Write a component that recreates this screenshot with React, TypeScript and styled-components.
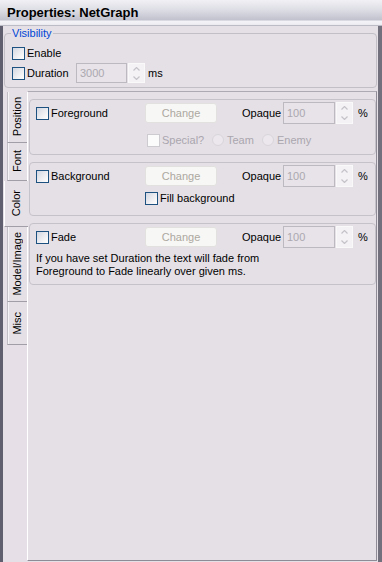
import React from 'react'
import styled, { createGlobalStyle } from 'styled-components'

const GlobalStyle = createGlobalStyle`
  html, body {
    margin: 0;
    padding: 0;
  }
  body {
    background: #e5e0e6;
    font-family: "Liberation Sans", Arial, sans-serif;
    font-size: 11px;
    color: #000;
  }
`

const Window = styled.div`
  width: 382px;
  height: 562px;
  display: flex;
  flex-direction: column;
  overflow: hidden;
  background: #e5e0e6;
`

const TitleBar = styled.div`
  height: 26px;
  flex: none;
  box-sizing: border-box;
  padding: 5px 0 0 7px;
  font-size: 13px;
  font-weight: bold;
  line-height: 15px;
  background: linear-gradient(
    #f1f1f5 0%,
    #dcdce4 40%,
    #c2c2ce 76%,
    #f3f3f7 82%,
    #eeeef3 94%,
    #a4a4b2 100%
  );
`

const Body = styled.div`
  flex: 1;
  min-height: 0;
  display: flex;
  flex-direction: column;
  padding: 1px 0 1px;
  border-left: 3px solid #5f5f6f;
  border-right: 4px solid #72707c;
`

const GroupBox = styled.fieldset`
  margin: 0 1px;
  padding: 4px 0 4px 7px;
  border: 1px solid #c3bfc7;
  border-radius: 4px;
  display: flex;
  flex-direction: column;
  gap: 1px;
`

const Legend = styled.legend`
  padding: 0 1px;
  margin-left: -1px;
  line-height: 13px;
  color: #0046d5;
`

const Row = styled.div<{ $h: number; $indent?: number }>`
  height: ${(p) => p.$h}px;
  display: flex;
  align-items: center;
  padding-left: ${(p) => p.$indent ?? 0}px;
`

const CheckLabel = styled.label<{ $w?: number; $disabled?: boolean }>`
  display: flex;
  align-items: center;
  gap: 2px;
  width: ${(p) => (p.$w ? `${p.$w}px` : 'auto')};
  flex: none;
  color: ${(p) => (p.$disabled ? '#aaa6ae' : '#000')};
`

const Check = styled.span<{ $disabled?: boolean }>`
  width: 13px;
  height: 13px;
  box-sizing: border-box;
  flex: none;
  border: 1px solid ${(p) => (p.$disabled ? '#cdcad0' : '#1c5180')};
  background: ${(p) =>
    p.$disabled ? '#fbfbfb' : 'linear-gradient(135deg, #d3d7e2 0%, #f4f4f6 70%, #ffffff 100%)'};
`

const Radio = styled.span`
  width: 12px;
  height: 12px;
  box-sizing: border-box;
  flex: none;
  border-radius: 50%;
  border: 1px solid #d8d5db;
  background: #ebe7ec;
  margin-right: 1px;
`

const NumberBox = styled.div<{ $w: number; $h: number }>`
  width: ${(p) => p.$w}px;
  height: ${(p) => p.$h}px;
  box-sizing: border-box;
  flex: none;
  border: 1px solid #bdb9c1;
  background: #e7e3e8;
  color: #aca8b0;
  padding: 0 0 0 3px;
  display: flex;
  align-items: center;
`

const Spinner = styled.div<{ $h: number }>`
  width: 17px;
  height: ${(p) => p.$h}px;
  box-sizing: border-box;
  flex: none;
  margin-left: 1px;
  display: grid;
  grid-template-rows: 1fr 1fr;
  background: #f4f2f4;
  border: 1px solid #faf9fa;
`

const SpinHalf = styled.div`
  display: flex;
  align-items: center;
  justify-content: center;
`

const Unit = styled.span<{ $gap: number }>`
  margin-left: ${(p) => p.$gap}px;
`

const ChangeButton = styled.div`
  width: 72px;
  height: 20px;
  box-sizing: border-box;
  flex: none;
  border: 1px solid #e3e1e0;
  border-radius: 3px;
  background: #f7f7f5;
  color: #aca8a0;
  display: flex;
  align-items: center;
  justify-content: center;
`

const OpaqueLabel = styled.span`
  width: 41px;
  margin-left: 25px;
  flex: none;
`

const TabArea = styled.div`
  flex: 1;
  min-height: 0;
  display: flex;
  margin: 3px 1px 0 2px;
`

const TabStrip = styled.div`
  width: 22px;
  flex: none;
  display: flex;
  flex-direction: column;
  align-items: flex-start;
  padding-top: 1px;
  background: #e6dfe7;
`

const Tab = styled.div<{ $len: number; $active?: boolean }>`
  height: ${(p) => p.$len}px;
  width: ${(p) => (p.$active ? 24 : 20)}px;
  margin-left: ${(p) => (p.$active ? -1 : 2)}px;
  box-sizing: border-box;
  display: flex;
  align-items: center;
  justify-content: center;
  border-left: 1px solid ${(p) => (p.$active ? '#ffffff' : '#c2bec6')};
  border-bottom: 1px solid #a29ea8;
  box-shadow: ${(p) => (p.$active ? 'none' : 'inset 1px 0 #f6f4f7')};
  background: #e5e0e6;
  position: relative;
  z-index: ${(p) => (p.$active ? 1 : 0)};
`

const TabText = styled.span`
  writing-mode: vertical-rl;
  transform: rotate(180deg);
  white-space: nowrap;
  line-height: 13px;
`

const Panel = styled.div`
  flex: 1;
  display: flex;
  flex-direction: column;
  gap: 7px;
  padding: 7px 0 0 1px;
  border-top: 1px solid #aeaab3;
  border-left: 1px solid #ffffff;
  border-right: 1px solid #8e8a96;
  border-bottom: 1px solid #8e8a96;
`

const Group = styled.div<{ $h: number; $gap: number }>`
  height: ${(p) => p.$h}px;
  box-sizing: border-box;
  display: flex;
  flex-direction: column;
  gap: ${(p) => p.$gap}px;
  padding: 2px 0 0 6px;
  border: 1px solid #c6c2ca;
  border-radius: 4px;
`

const Note = styled.p`
  margin: 0;
  line-height: 13px;
  white-space: nowrap;
`

const Option = styled.label<{ $w?: number }>`
  display: flex;
  align-items: center;
  gap: 2px;
  width: ${(p) => (p.$w ? `${p.$w}px` : 'auto')};
  flex: none;
  color: #aaa6ae;
`

const Arrow = ({ up }: { up?: boolean }) => (
  <svg width="7" height="4" viewBox="0 0 7 4">
    <path
      d={up ? 'M0.5 3.5 L3.5 0.5 L6.5 3.5' : 'M0.5 0.5 L3.5 3.5 L6.5 0.5'}
      fill="none"
      stroke="#c6c2c9"
      strokeWidth="1.2"
    />
  </svg>
)

const SpinBox = ({ value, w, h }: { value: string; w: number; h: number }) => (
  <>
    <NumberBox $w={w} $h={h}>{value}</NumberBox>
    <Spinner $h={h}>
      <SpinHalf><Arrow up /></SpinHalf>
      <SpinHalf><Arrow /></SpinHalf>
    </Spinner>
  </>
)

const ColorRow = ({ label }: { label: string }) => (
  <Row $h={22}>
    <CheckLabel $w={109}>
      <Check />
      {label}
    </CheckLabel>
    <ChangeButton>Change</ChangeButton>
    <OpaqueLabel>Opaque</OpaqueLabel>
    <SpinBox value="100" w={52} h={22} />
    <Unit $gap={5}>%</Unit>
  </Row>
)

const tabs = [
  { name: 'Position', len: 51 },
  { name: 'Font', len: 38 },
  { name: 'Color', len: 46, active: true },
  { name: 'Model/Image', len: 75 },
  { name: 'Misc', len: 43 },
]

export default function App() {
  return (
    <Window>
      <GlobalStyle />
      <TitleBar>Properties: NetGraph</TitleBar>
      <Body>
        <GroupBox>
          <Legend>Visibility</Legend>
          <Row $h={18}>
            <CheckLabel>
              <Check />
              Enable
            </CheckLabel>
          </Row>
          <Row $h={20}>
            <CheckLabel $w={64}>
              <Check />
              Duration
            </CheckLabel>
            <SpinBox value="3000" w={51} h={20} />
            <Unit $gap={3}>ms</Unit>
          </Row>
        </GroupBox>
        <TabArea>
          <TabStrip>
            {tabs.map((t) => (
              <Tab key={t.name} $len={t.len} $active={t.active}>
                <TabText>{t.name}</TabText>
              </Tab>
            ))}
          </TabStrip>
          <Panel>
            <Group $h={56} $gap={5}>
              <ColorRow label="Foreground" />
              <Row $h={22} $indent={111}>
                <Option $w={65}>
                  <Check $disabled />
                  Special?
                </Option>
                <Option $w={50}>
                  <Radio />
                  Team
                </Option>
                <Option>
                  <Radio />
                  Enemy
                </Option>
              </Row>
            </Group>
            <Group $h={54} $gap={0}>
              <ColorRow label="Background" />
              <Row $h={22} $indent={109}>
                <CheckLabel>
                  <Check />
                  Fill background
                </CheckLabel>
              </Row>
            </Group>
            <Group $h={62} $gap={4}>
              <ColorRow label="Fade" />
              <Note>
                If you have set Duration the text will fade from
                <br />
                Foreground to Fade linearly over given ms.
              </Note>
            </Group>
          </Panel>
        </TabArea>
      </Body>
    </Window>
  )
}
